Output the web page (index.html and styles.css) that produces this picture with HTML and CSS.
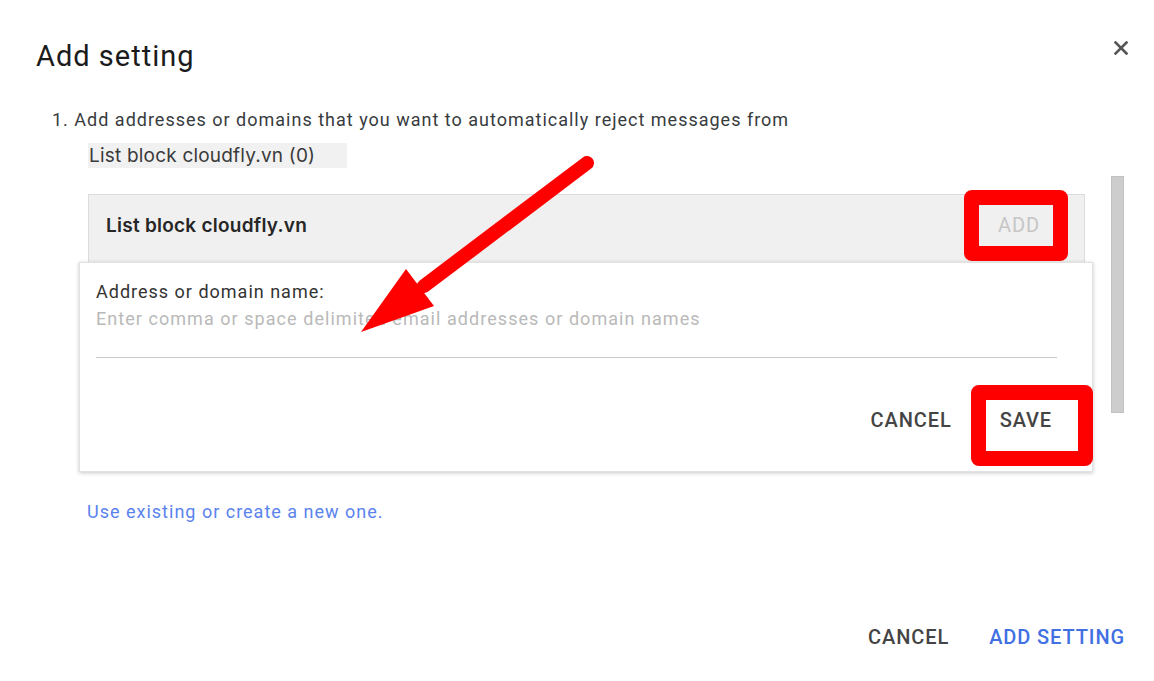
FILE: index.html
```html
<!DOCTYPE html>
<html lang="en">
<head>
<meta charset="utf-8">
<title>Add setting</title>
<link rel="stylesheet" href="styles.css">
</head>
<body>
<div class="page">
  <header class="header">
    <h1 class="title">Add setting</h1>
    <button class="close" aria-label="Close">
      <svg width="14" height="14" viewBox="0 0 14 14"><path d="M1.5 1.5 L12.5 12.5 M12.5 1.5 L1.5 12.5" stroke="#555" stroke-width="2.6" stroke-linecap="square" fill="none"/></svg>
    </button>
  </header>
  <p class="instruction">1. Add addresses or domains that you want to automatically reject messages from</p>
  <div class="chip">List block cloudfly.vn (0)</div>
  <div class="scroll-region">
    <div class="list-col">
      <div class="panel">
        <span class="panel-title">List block cloudfly.vn</span>
        <button class="btn btn-add">ADD</button>
      </div>
      <div class="card">
        <div class="field-label">Address or domain name:</div>
        <div class="field-input">Enter comma or space delimited email addresses or domain names</div>
        <div class="card-actions">
          <button class="btn">CANCEL</button>
          <button class="btn btn-save">SAVE</button>
        </div>
      </div>
    </div>
    <div class="scrollbar"></div>
  </div>
  <a class="link">Use existing or create a new one.</a>
  <div class="footer">
    <button class="btn">CANCEL</button>
    <button class="btn btn-primary">ADD SETTING</button>
  </div>
  <svg class="arrow" width="1154" height="681" viewBox="0 0 1154 681">
    <line x1="587" y1="163" x2="424" y2="286" stroke="#ff0000" stroke-width="14" stroke-linecap="round"/>
    <polygon points="361,332 406,269 434,306" fill="#ff0000"/>
  </svg>
</div>
</body>
</html>
```

FILE: styles.css
```css
* { box-sizing: border-box; }
html, body { margin: 0; padding: 0; background: #ffffff; }
body {
  font-family: Roboto, "Liberation Sans", Arial, sans-serif;
  color: #3c4043;
}
.page {
  position: relative;
  width: 1154px;
  height: 681px;
  overflow: hidden;
  padding: 40px 26px 0 36px;
}
.header {
  display: flex;
  justify-content: space-between;
  align-items: flex-start;
  height: 32px;
}
.title {
  margin: 0;
  font-size: 29px;
  line-height: 32px;
  font-weight: 400;
  letter-spacing: 1px;
  color: #1b1b1b;
}
.close {
  margin-top: 1px;
  padding: 0;
  border: 0;
  background: none;
  width: 14px;
  height: 14px;
  display: block;
}
.close svg { display: block; }
.instruction {
  margin: 36px 0 0 16px;
  font-size: 18px;
  line-height: 24px;
  letter-spacing: 1px;
  color: #383b3e;
}
.chip {
  margin: 11px 0 0 52px;
  width: fit-content;
  height: 25px;
  line-height: 25px;
  padding: 0 32px 0 1px;
  background: #f1f1f1;
  font-family: Inter, Roboto, sans-serif;
  font-size: 19px;
  letter-spacing: 0.2px;
  color: #3a3a3a;
}
.scroll-region {
  display: flex;
  align-items: flex-start;
  margin: 8px 0 0 43px;
}
.list-col {
  width: 1014px;
  padding-top: 18px;
}
.panel {
  margin: 0 8px 0 9px;
  height: 68px;
  background: #f0f0f0;
  border: 1px solid #dcdcdc;
  border-bottom: 0;
  display: flex;
  align-items: center;
  justify-content: space-between;
  padding: 0 31px 6px 17px;
}
.panel-title {
  font-family: Inter, Roboto, sans-serif;
  font-size: 19px;
  letter-spacing: 0.25px;
  font-weight: 600;
  color: #262626;
}
.btn {
  font-family: inherit;
  font-size: 20px;
  font-weight: 500;
  letter-spacing: 0.9px;
  color: #444;
  background: none;
  border: 0;
  padding: 0 14px;
  height: 36px;
  line-height: 36px;
  cursor: pointer;
}
.btn-add {
  position: relative;
  width: 74px;
  height: 41px;
  line-height: 41px;
  padding: 0 0 0 6px;
  color: #c6c6c6;
  font-weight: 400;
}
.btn-add::after {
  content: "";
  position: absolute;
  inset: -15px;
  border: 15px solid #ff0000;
  border-radius: 8px;
  z-index: 3;
}
.card {
  position: relative;
  z-index: 1;
  height: 210px;
  background: #fff;
  border: 1px solid #e2e2e2;
  box-shadow: 0 1px 4px rgba(0, 0, 0, 0.22);
  padding: 17px 35px 0 16px;
}
.field-label {
  font-size: 18px;
  line-height: 24px;
  letter-spacing: 1px;
  color: #333;
}
.field-input {
  margin-top: 3px;
  font-size: 18px;
  line-height: 24px;
  letter-spacing: 1.05px;
  color: #b9b9b9;
  padding-bottom: 26px;
  border-bottom: 1px solid #c9c9c9;
}
.card-actions {
  display: flex;
  justify-content: flex-end;
  gap: 20px;
  margin: 44px -9px 0 0;
}
.btn-save {
  position: relative;
}
.btn-save::after {
  content: "";
  position: absolute;
  left: -15px;
  right: -27px;
  top: -17px;
  bottom: -28px;
  border: 15px solid #ff0000;
  border-radius: 8px;
  z-index: 3;
}
.scrollbar {
  margin-left: 18px;
  width: 13px;
  height: 237px;
  background: #cdcdcd;
  border: 1px solid #c2c2c2;
}
.link {
  display: block;
  margin: 28px 0 0 51px;
  font-size: 18px;
  line-height: 24px;
  letter-spacing: 1px;
  color: #5a83ee;
  text-decoration: none;
  width: fit-content;
}
.footer {
  display: flex;
  justify-content: flex-end;
  gap: 40px;
  margin-top: 95px;
  padding-right: 3px;
}
.footer .btn { padding: 0; }
.btn-primary { color: #4170e2; }
.arrow {
  position: absolute;
  left: 0;
  top: 0;
  z-index: 5;
  pointer-events: none;
}
```
